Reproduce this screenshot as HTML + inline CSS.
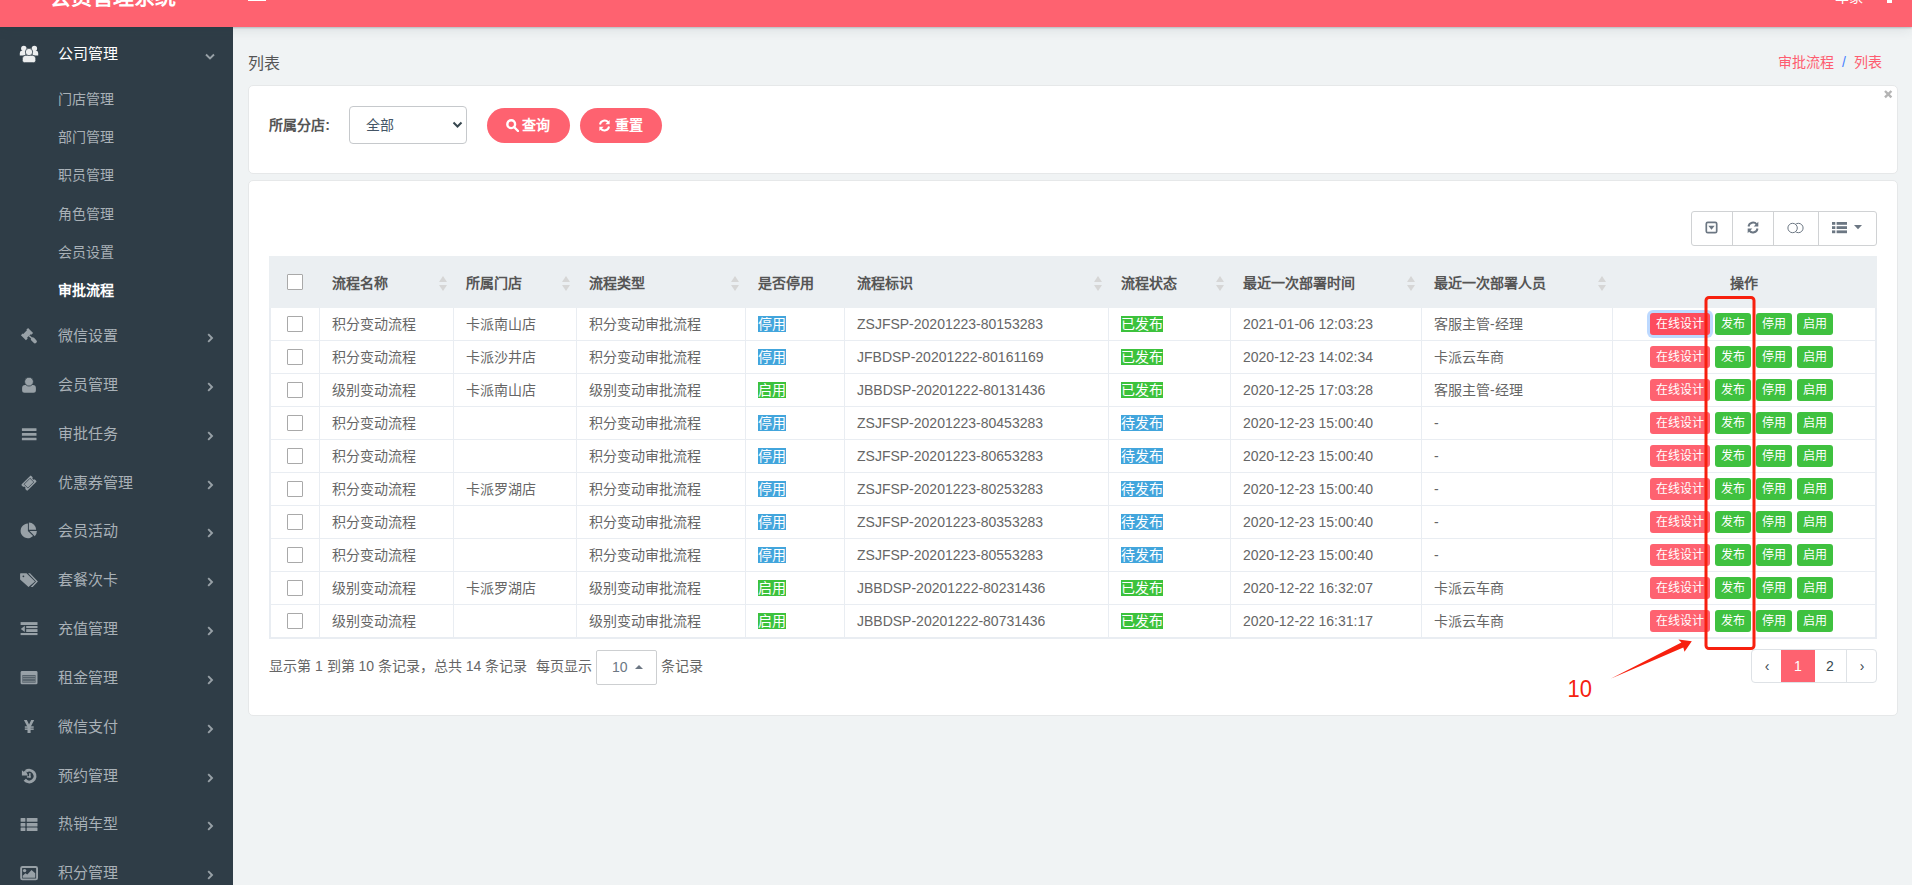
<!DOCTYPE html>
<html lang="zh-CN">
<head>
<meta charset="utf-8">
<title>会员管理系统</title>
<style>
*{box-sizing:border-box;margin:0;padding:0}
html,body{width:1912px;height:885px;overflow:hidden}
body{font-family:"Liberation Sans",sans-serif;font-size:14px;color:#666;background:#f0f3f4;position:relative}
.j{display:inline-block;white-space:nowrap;text-align:justify;text-align-last:justify;vertical-align:top}
/* header */
#hdr{position:absolute;left:0;top:0;width:1912px;height:27px;background:#fe6270;z-index:5;box-shadow:0 1px 2px rgba(40,60,70,.26),0 3px 12px rgba(40,60,70,.10);overflow:hidden}
#hdr .logo{width:126px;text-align:justify;text-align-last:justify;position:absolute;left:50px;top:-14px;font-size:21px;font-weight:bold;color:#fff;line-height:22px;white-space:nowrap}
#hdr .tog{position:absolute;left:248px;top:-2px;width:18px;height:3px;background:#fff}
#hdr .usr{width:28px;text-align:justify;text-align-last:justify;position:absolute;left:1835px;top:-11px;font-size:14px;color:#fff;line-height:16px;white-space:nowrap}
#hdr .usr2{position:absolute;left:1887px;top:-2px;width:5px;height:5px;background:#fff}
/* sidebar */
#side{position:absolute;left:0;top:27px;width:233px;height:858px;background:#2f3d47;z-index:2;overflow:hidden}
#side .mi{position:absolute;left:0;width:233px;height:30px;line-height:30px;color:#a9b1b7;font-size:15px;white-space:nowrap}
#side .mi .tx{position:absolute;left:58px;top:0;text-align:justify;text-align-last:justify}
#side .mi svg.ic{position:absolute;left:19px;top:6px;width:20px;height:18px;fill:#98a1a7}
#side .mi svg.ar{position:absolute;fill:none;stroke:#98a1a7;stroke-width:1.9}
#side .mi.on{color:#fff}
#side .mi.on svg.ic{fill:#eceeef}
#side .si{text-align:justify;text-align-last:justify;position:absolute;left:58px;height:20px;line-height:20px;color:#a9b1b7;font-size:14px;white-space:nowrap}
#side .si.on{color:#fff;font-weight:bold}
/* main */
#ttl{width:32px;white-space:nowrap;text-align:justify;text-align-last:justify;position:absolute;left:248px;top:53px;font-size:16px;line-height:22px;color:#555}
#bc{position:absolute;right:30px;top:52px;font-size:14px;line-height:20px;color:#fe5d70;white-space:nowrap}
#bc i{font-style:normal;color:#4680ff;margin:0 8px;vertical-align:top}
.card{position:absolute;background:#fff;border:1px solid #e6e8e9;border-radius:5px}
#c1{left:248px;top:85px;width:1650px;height:89px}
#c2{left:248px;top:180px;width:1650px;height:536px}
#cls{position:absolute;left:1883px;top:89px;width:10px;height:10px}
#lbl{width:61px;text-align:justify;text-align-last:justify;position:absolute;left:269px;top:116px;font-size:14px;font-weight:bold;color:#555;line-height:18px;white-space:nowrap}
#sel{position:absolute;left:349px;top:106px;width:118px;height:38px;border:1px solid #c6c9cc;border-radius:4px;background:#fff;color:#445566;font-size:14px;line-height:36px;padding-left:16px}
#sel svg{position:absolute;left:102px;top:13px;width:11px;height:9px;fill:none;stroke:#37474f;stroke-width:2}
.pb{position:absolute;top:108px;height:35px;border-radius:18px;background:#fe6270;color:#fff;font-size:14px;font-weight:bold;line-height:35px;white-space:nowrap}
.pb svg{position:absolute;top:11px;width:13px;height:13px}
.pb span{position:absolute;top:0;width:28px;text-align:justify;text-align-last:justify}
/* toolbar */
#tool{position:absolute;left:1691px;top:211px;width:186px;height:35px;border:1px solid #d0d2d4;border-radius:3px;background:#fff}
#tool div{position:absolute;top:0;height:33px;border-left:1px solid #d0d2d4}
#tool svg{position:absolute}
/* table */
#tb{position:absolute;left:269px;top:256px;width:1608px;border-collapse:separate;border-spacing:0;table-layout:fixed;font-size:14px;color:#666}
#tb th{height:52px;background:#ebeff2;font-weight:bold;color:#555;text-align:left;padding:0 0 0 12px;position:relative;white-space:nowrap;vertical-align:middle}
#tb td{height:33px;border-right:1px solid #e9edf2;border-bottom:1px solid #e9edf2;padding:0 0 0 12px;white-space:nowrap;vertical-align:middle;background:#fff;line-height:16px}
#tb td.la{padding-left:12px}
#tb tbody tr td:first-child{border-left:2px solid #e9edf2}
#tb tbody tr td:last-child{border-right:2px solid #e9edf2}
#tb tbody tr:last-child td{border-bottom:2px solid #e9edf2;height:34px}
#tb .ck{padding:0;text-align:left}
#tb .cb{display:block;width:16px;height:16px;border:1px solid #a9a9a9;background:#fff;margin-left:18px;border-radius:1px}
#tb td.ck .cb{margin-left:16px}
#tb th.op{text-align:center;padding:0 2px 0 0}
#tb td.op{padding:0 0 0 37px;font-size:0}
#tb .so{position:absolute;right:7px;top:20px;width:8px;height:15px}
#tb .so:before,#tb .so:after{content:"";position:absolute;left:0;border-left:4px solid transparent;border-right:4px solid transparent}
#tb .so:before{top:0;border-bottom:6px solid #d6d6d6}
#tb .so:after{top:9px;border-top:6px solid #d6d6d6}
.lb{text-align:justify;text-align-last:justify;display:inline-block;width:28px;overflow:hidden;white-space:nowrap;height:16px;line-height:16px;color:#fff;font-size:14px;vertical-align:middle;position:relative;top:-1px}
.lb.w3{width:42px}
.lb.bl{background:#42a5dc}
.lb.gr{background:#3cc23c}
.ab{display:inline-block;width:36px;height:22px;line-height:22px;font-size:12px;color:#fff;border-radius:3px;padding:0 6px;text-align:justify;text-align-last:justify;overflow:hidden;white-space:nowrap;margin-right:5px;vertical-align:middle}
.ab.rd{background:#fe6270;width:60px}
.ab.rd.fc{background:#fd4c5e;box-shadow:0 0 0 3px rgba(90,160,255,.4)}
.ab.gn{background:#3fc13f}
/* footer */
#ft{width:258px;text-align:justify;text-align-last:justify;position:absolute;left:269px;top:656px;font-size:14px;line-height:20px;color:#666;white-space:nowrap}
#ps{position:absolute;left:596px;top:650px;width:61px;height:35px;border:1px solid #cdcfd1;border-radius:2px;background:#fff;font-size:14px;line-height:33px;color:#6c7783;padding-left:15px}
#ps:after{content:"";position:absolute;left:38px;top:14px;border-left:4px solid transparent;border-right:4px solid transparent;border-bottom:4px solid #6c7783}
#ft1{width:56px;text-align:justify;text-align-last:justify;position:absolute;left:536px;top:656px;font-size:14px;line-height:20px;color:#666;white-space:nowrap}
#ft2{width:42px;text-align:justify;text-align-last:justify;position:absolute;left:661px;top:656px;font-size:14px;line-height:20px;color:#666;white-space:nowrap}
#pg{position:absolute;left:1751px;top:649px;width:126px;height:34px;border:1px solid #dee2e6;border-radius:4px;background:#fff;overflow:hidden}
#pg span{position:absolute;top:-1px;height:34px;line-height:34px;text-align:center;font-size:14px;color:#37474f;border-left:1px solid #dee2e6}
#pg span.on{background:#fe6270;color:#fff;border-left:none}
/* annotation */
#ann{position:absolute;left:0;top:0;width:1912px;height:885px;z-index:9;pointer-events:none}
#ten{position:absolute;left:1567.500px;top:676px;font-size:22px;line-height:24px;color:#f5220f;z-index:9;transform:scale(1,1.08);transform-origin:0 0}
</style>
</head>
<body>
<div id="hdr"><div class="logo">会员管理系统</div><div class="tog"></div><div class="usr">车家</div><div class="usr2"></div></div>
<div id="side">
<div class="mi on" style="top:12px"><svg class="ic" viewBox="0 0 20 18"><path d="M.8 10.600V8q0-2.200 2.200-2.200h2q1.500 0 1.500 1.500v3.300z"/><path d="M19.200 10.600V8q0-2.200-2.200-2.200h-2q-1.500 0-1.500 1.500v3.300z"/><circle cx="4.800" cy="3.500" r="2.700"/><circle cx="15.400" cy="3.500" r="2.700"/><path d="M3.300 15.500v-1.800q0-3.500 3.500-3.500h6.500q3.500 0 3.500 3.500v1.800q0 2.200-2.200 2.200H5.500q-2.200 0-2.200-2.200z" stroke="#2f3d47" stroke-width=".8"/><circle cx="10" cy="7" r="3.650" stroke="#2f3d47" stroke-width=".7"/></svg><span class="tx" style="width:4em">公司管理</span><svg class="ar" style="left:205px;top:12px;width:10px;height:10px" viewBox="0 0 10 10"><path d="M1 3.500l4 4 4-4"/></svg></div>
<div class="si" style="top:62px;width:4em">门店管理</div>
<div class="si" style="top:100px;width:4em">部门管理</div>
<div class="si" style="top:138px;width:4em">职员管理</div>
<div class="si" style="top:177px;width:4em">角色管理</div>
<div class="si" style="top:215px;width:4em">会员设置</div>
<div class="si on" style="top:253px;width:4em">审批流程</div>
<div class="mi" style="top:294px"><svg class="ic" viewBox="0 0 20 18"><g transform="translate(8 7.100) rotate(-45)"><path d="M-5.050-3.550h2.450v.85h5.200v-.85h2.450v7.100h-2.450v-.85h-5.200v.85h-2.450z"/><rect x="-.3" y="2.700" width="1.400" height="4"/><rect x="-1.500" y="5.800" width="3.800" height="6.900" rx="1.800"/></g></svg><span class="tx" style="width:4em">微信设置</span><svg class="ar" style="left:206px;top:12px;width:10px;height:10px" viewBox="0 0 10 10"><path d="M2.200 1.200l3.800 3.800-3.800 3.800"/></svg></div>
<div class="mi" style="top:343px"><svg class="ic" viewBox="0 0 20 18"><path d="M3.100 14.300v-2.400q0-3 3-3h7.800q3 0 3 3v2.400q0 2.500-2.500 2.500H5.600q-2.500 0-2.500-2.500z"/><circle cx="10" cy="5.650" r="4.400" stroke="#2f3d47" stroke-width=".8"/></svg><span class="tx" style="width:4em">会员管理</span><svg class="ar" style="left:206px;top:12px;width:10px;height:10px" viewBox="0 0 10 10"><path d="M2.200 1.200l3.800 3.800-3.800 3.800"/></svg></div>
<div class="mi" style="top:392px"><svg class="ic" viewBox="0 0 20 18"><rect x="2.900" y="3.200" width="14.600" height="2.700" rx=".3"/><rect x="2.900" y="8" width="14.600" height="2.700" rx=".3"/><rect x="2.900" y="12.700" width="14.600" height="2.500" rx=".3"/></svg><span class="tx" style="width:4em">审批任务</span><svg class="ar" style="left:206px;top:12px;width:10px;height:10px" viewBox="0 0 10 10"><path d="M2.200 1.200l3.800 3.800-3.800 3.800"/></svg></div>
<div class="mi" style="top:441px"><svg class="ic" viewBox="0 0 20 18"><g transform="translate(9.950 9.150) rotate(-45)"><rect x="-6.800" y="-4.300" width="13.600" height="8.600" rx=".9"/><circle cx="-6.900" cy="0" r="1.400" fill="#2f3d47"/><circle cx="6.900" cy="0" r="1.400" fill="#2f3d47"/><rect x="-4.200" y="-2.700" width="8.400" height="5.400" fill="none" stroke="#2f3d47" stroke-width=".7"/></g></svg><span class="tx" style="width:5em">优惠券管理</span><svg class="ar" style="left:206px;top:12px;width:10px;height:10px" viewBox="0 0 10 10"><path d="M2.200 1.200l3.800 3.800-3.800 3.800"/></svg></div>
<div class="mi" style="top:489px"><svg class="ic" viewBox="0 0 20 18"><path d="M8.900 8.900V1.600A7.300 7.300 0 1 0 14.060 14.060z"/><path d="M9.850 7.800V.5a7.300 7.300 0 0 1 7.300 7.300z"/><path d="M10.600 9.100h7.300a7.300 7.300 0 0 1-2.140 5.160z"/></svg><span class="tx" style="width:4em">会员活动</span><svg class="ar" style="left:206px;top:12px;width:10px;height:10px" viewBox="0 0 10 10"><path d="M2.200 1.200l3.800 3.800-3.800 3.800"/></svg></div>
<div class="mi" style="top:538px"><svg class="ic" viewBox="0 0 20 18"><path fill-rule="evenodd" d="M1.100 2.800q0-.6.600-.6h5.800l8.500 8.300-6.500 5.500-8.400-7.500zM4.400 4.400a.9.900 0 1 0 0 1.800.9.900 0 0 0 0-1.800z"/><path d="M9.100 2.200H11l7.900 8.300-5.200 5.500h-2.100l5.400-5.500z"/></svg><span class="tx" style="width:4em">套餐次卡</span><svg class="ar" style="left:206px;top:12px;width:10px;height:10px" viewBox="0 0 10 10"><path d="M2.200 1.200l3.800 3.800-3.800 3.800"/></svg></div>
<div class="mi" style="top:587px"><svg class="ic" viewBox="0 0 20 18"><rect x="1.600" y="2.100" width="16.900" height="2.900"/><rect x="7.200" y="6" width="11.300" height="2.100"/><rect x="7.200" y="9.100" width="11.300" height="2.900"/><rect x="1.600" y="13" width="16.900" height="2.100"/><path d="M5.800 5.800V12L1.800 9z"/></svg><span class="tx" style="width:4em">充值管理</span><svg class="ar" style="left:206px;top:12px;width:10px;height:10px" viewBox="0 0 10 10"><path d="M2.200 1.200l3.800 3.800-3.800 3.800"/></svg></div>
<div class="mi" style="top:636px"><svg class="ic" viewBox="0 0 20 18"><rect x="1.600" y="2.100" width="16.900" height="13.200" rx="1.400"/><rect x="3.300" y="6" width="13.300" height="7.700" fill="#56626b"/><rect x="3.800" y="7" width="12.300" height=".7" fill="#8b959b"/><rect x="3.800" y="9.400" width="12.300" height=".7" fill="#8b959b"/><rect x="3.800" y="11.900" width="12.300" height=".7" fill="#8b959b"/></svg><span class="tx" style="width:4em">租金管理</span><svg class="ar" style="left:206px;top:12px;width:10px;height:10px" viewBox="0 0 10 10"><path d="M2.200 1.200l3.800 3.800-3.800 3.800"/></svg></div>
<div class="mi" style="top:685px"><svg class="ic" viewBox="0 0 20 18"><path d="M4.900 2.100h3l2.150 4.500 2.150-4.500h3l-3.600 6.900v6.100H8.500V9z"/><rect x="5.800" y="8.300" width="8.900" height="1.500"/><rect x="5.800" y="10.400" width="8.900" height="1.500"/></svg><span class="tx" style="width:4em">微信支付</span><svg class="ar" style="left:206px;top:12px;width:10px;height:10px" viewBox="0 0 10 10"><path d="M2.200 1.200l3.800 3.800-3.800 3.800"/></svg></div>
<div class="mi" style="top:734px"><svg class="ic" viewBox="0 0 20 18"><path d="M6.870 4.350A5.800 5.800 0 1 1 5.760 12.830" fill="none" stroke="#98a1a7" stroke-width="3"/><path d="M2.900 3.200l1.800 1.600 1.600-1.500 2.800 5.200H2.900z"/><rect x="10.100" y="6.200" width="1.500" height="4.400"/><rect x="7.900" y="9.200" width="3.700" height="1.400"/></svg><span class="tx" style="width:4em">预约管理</span><svg class="ar" style="left:206px;top:12px;width:10px;height:10px" viewBox="0 0 10 10"><path d="M2.200 1.200l3.800 3.800-3.800 3.800"/></svg></div>
<div class="mi" style="top:782px"><svg class="ic" viewBox="0 0 20 18"><rect x="1.600" y="3.100" width="4.800" height="3.700" rx=".5"/><rect x="7.700" y="3.100" width="10.800" height="3.700" rx=".5"/><rect x="1.600" y="8" width="4.800" height="3.400" rx=".5"/><rect x="7.700" y="8" width="10.800" height="3.400" rx=".5"/><rect x="1.600" y="12.600" width="4.800" height="3.500" rx=".5"/><rect x="7.700" y="12.600" width="10.800" height="3.500" rx=".5"/></svg><span class="tx" style="width:4em">热销车型</span><svg class="ar" style="left:206px;top:12px;width:10px;height:10px" viewBox="0 0 10 10"><path d="M2.200 1.200l3.800 3.800-3.800 3.800"/></svg></div>
<div class="mi" style="top:831px"><svg class="ic" viewBox="0 0 20 18"><rect x="2.150" y="2.950" width="15.900" height="12.400" rx="1.300" fill="none" stroke="#98a1a7" stroke-width="1.900"/><circle cx="5.600" cy="6.600" r="1.700"/><path d="M3.700 13.700v-2l2.700-2.400 1.900 1.200 4.200-4.400 3.750 3.200v4.400z"/></svg><span class="tx" style="width:4em">积分管理</span><svg class="ar" style="left:206px;top:12px;width:10px;height:10px" viewBox="0 0 10 10"><path d="M2.200 1.200l3.800 3.800-3.800 3.800"/></svg></div>
</div>
<div id="ttl">列表</div>
<div id="bc"><span class="j" style="width:4em">审批流程</span><i>/</i><span class="j" style="width:2em">列表</span></div>
<div class="card" id="c1"></div>
<div class="card" id="c2"></div>
<svg id="cls" viewBox="0 0 10 10"><path d="M2 2l6.400 6.400M8.400 2L2 8.400" stroke="#b4b4b4" stroke-width="2.400" fill="none"/></svg>
<div id="lbl">所属分店:</div>
<div id="sel"><span class="j" style="width:2em">全部</span><svg viewBox="0 0 11 9"><path d="M1.500 2.500 L5.500 6.500 L9.500 2.500"/></svg></div>
<div class="pb" style="left:487px;width:83px"><svg style="left:19px" viewBox="0 0 13 13"><circle cx="5.200" cy="5.200" r="3.900" fill="none" stroke="#fff" stroke-width="2.400"/><path d="M8 8 L12 12" stroke="#fff" stroke-width="2.400" stroke-linecap="round"/></svg><span style="left:35px">查询</span></div>
<div class="pb" style="left:580px;width:82px"><svg style="left:18px" viewBox="0 0 13 13"><path d="M2 5.500 A4.600 4.600 0 0 1 10.200 3.400" fill="none" stroke="#fff" stroke-width="2"/><path d="M11.600 1 V5.200 H7.400 Z" fill="#fff"/><path d="M11 7.500 A4.600 4.600 0 0 1 2.800 9.600" fill="none" stroke="#fff" stroke-width="2"/><path d="M1.400 12 V7.800 H5.600 Z" fill="#fff"/></svg><span style="left:35px">重置</span></div>
<div id="tool">
<svg style="left:13px;top:9px;width:13px;height:13px" viewBox="0 0 13 13"><rect x="1.300" y="1.300" width="10.400" height="10.400" rx="1.500" fill="none" stroke="#6c7783" stroke-width="1.700"/><path d="M3.300 4.700h6.400L6.500 8.700z" fill="#6c7783"/></svg>
<div style="left:40px;width:41px"><svg style="left:12.500px;top:9.400px;width:14px;height:13px" viewBox="0 0 13 13"><path d="M2 5.500 A4.600 4.600 0 0 1 10.200 3.400" fill="none" stroke="#6c7783" stroke-width="1.900"/><path d="M11.800 .8 V5.400 H7.200 Z" fill="#6c7783"/><path d="M11 7.500 A4.600 4.600 0 0 1 2.800 9.600" fill="none" stroke="#6c7783" stroke-width="1.900"/><path d="M1.200 12.200 V7.600 H5.800 Z" fill="#6c7783"/></svg></div>
<div style="left:81px;width:45px"><svg style="left:12px;top:10px;width:19px;height:12px" viewBox="0 0 19 12"><circle cx="12.400" cy="6" r="4.700" fill="none" stroke="#6c7783" stroke-width="1"/><circle cx="6.600" cy="6" r="4.700" fill="#fff" stroke="#6c7783" stroke-width="1"/></svg></div>
<div style="left:126px;width:59px"><svg style="left:13px;top:10px;width:16px;height:12px" viewBox="0 0 16 12"><rect x="0" y="0" width="3.300" height="2.800" fill="#6c7783"/><rect x="4.600" y="0" width="10.400" height="2.800" fill="#6c7783"/><rect x="0" y="4.200" width="3.300" height="2.800" fill="#6c7783"/><rect x="4.600" y="4.200" width="10.400" height="2.800" fill="#6c7783"/><rect x="0" y="8.400" width="3.300" height="2.800" fill="#6c7783"/><rect x="4.600" y="8.400" width="10.400" height="2.800" fill="#6c7783"/></svg><svg style="left:35px;top:13px;width:8px;height:5px" viewBox="0 0 8 5"><path d="M0 0h8L4 4.300z" fill="#6c7783"/></svg></div>
</div>
<table id="tb"><colgroup><col style="width:51px"><col style="width:134px"><col style="width:123px"><col style="width:169px"><col style="width:99px"><col style="width:264px"><col style="width:122px"><col style="width:191px"><col style="width:191px"><col style="width:264px"></colgroup>
<thead><tr>
<th class="ck"><span class="cb"></span></th>
<th><span class="j" style="width:4em">流程名称</span><b class="so"></b></th>
<th><span class="j" style="width:4em">所属门店</span><b class="so"></b></th>
<th><span class="j" style="width:4em">流程类型</span><b class="so"></b></th>
<th><span class="j" style="width:4em">是否停用</span></th>
<th><span class="j" style="width:4em">流程标识</span><b class="so"></b></th>
<th><span class="j" style="width:4em">流程状态</span><b class="so"></b></th>
<th><span class="j" style="width:8em">最近一次部署时间</span><b class="so"></b></th>
<th><span class="j" style="width:8em">最近一次部署人员</span><b class="so"></b></th>
<th class="op"><span class="j" style="width:2em">操作</span></th>
</tr></thead><tbody>
<tr>
<td class="ck"><span class="cb"></span></td>
<td><span class="j" style="width:6em">积分变动流程</span></td><td><span class="j" style="width:5em">卡派南山店</span></td><td><span class="j" style="width:8em">积分变动审批流程</span></td>
<td><span class="lb bl">停用</span></td>
<td class="la">ZSJFSP-20201223-80153283</td>
<td><span class="lb w3 gr">已发布</span></td>
<td class="la">2021-01-06 12:03:23</td><td><span class="j" style="width:6.333em">客服主管-经理</span></td>
<td class="op"><span class="ab rd fc">在线设计</span><span class="ab gn">发布</span><span class="ab gn">停用</span><span class="ab gn">启用</span></td>
</tr>
<tr>
<td class="ck"><span class="cb"></span></td>
<td><span class="j" style="width:6em">积分变动流程</span></td><td><span class="j" style="width:5em">卡派沙井店</span></td><td><span class="j" style="width:8em">积分变动审批流程</span></td>
<td><span class="lb bl">停用</span></td>
<td class="la">JFBDSP-20201222-80161169</td>
<td><span class="lb w3 gr">已发布</span></td>
<td class="la">2020-12-23 14:02:34</td><td><span class="j" style="width:5em">卡派云车商</span></td>
<td class="op"><span class="ab rd">在线设计</span><span class="ab gn">发布</span><span class="ab gn">停用</span><span class="ab gn">启用</span></td>
</tr>
<tr>
<td class="ck"><span class="cb"></span></td>
<td><span class="j" style="width:6em">级别变动流程</span></td><td><span class="j" style="width:5em">卡派南山店</span></td><td><span class="j" style="width:8em">级别变动审批流程</span></td>
<td><span class="lb gr">启用</span></td>
<td class="la">JBBDSP-20201222-80131436</td>
<td><span class="lb w3 gr">已发布</span></td>
<td class="la">2020-12-25 17:03:28</td><td><span class="j" style="width:6.333em">客服主管-经理</span></td>
<td class="op"><span class="ab rd">在线设计</span><span class="ab gn">发布</span><span class="ab gn">停用</span><span class="ab gn">启用</span></td>
</tr>
<tr>
<td class="ck"><span class="cb"></span></td>
<td><span class="j" style="width:6em">积分变动流程</span></td><td></td><td><span class="j" style="width:8em">积分变动审批流程</span></td>
<td><span class="lb bl">停用</span></td>
<td class="la">ZSJFSP-20201223-80453283</td>
<td><span class="lb w3 bl">待发布</span></td>
<td class="la">2020-12-23 15:00:40</td><td class="la">-</td>
<td class="op"><span class="ab rd">在线设计</span><span class="ab gn">发布</span><span class="ab gn">停用</span><span class="ab gn">启用</span></td>
</tr>
<tr>
<td class="ck"><span class="cb"></span></td>
<td><span class="j" style="width:6em">积分变动流程</span></td><td></td><td><span class="j" style="width:8em">积分变动审批流程</span></td>
<td><span class="lb bl">停用</span></td>
<td class="la">ZSJFSP-20201223-80653283</td>
<td><span class="lb w3 bl">待发布</span></td>
<td class="la">2020-12-23 15:00:40</td><td class="la">-</td>
<td class="op"><span class="ab rd">在线设计</span><span class="ab gn">发布</span><span class="ab gn">停用</span><span class="ab gn">启用</span></td>
</tr>
<tr>
<td class="ck"><span class="cb"></span></td>
<td><span class="j" style="width:6em">积分变动流程</span></td><td><span class="j" style="width:5em">卡派罗湖店</span></td><td><span class="j" style="width:8em">积分变动审批流程</span></td>
<td><span class="lb bl">停用</span></td>
<td class="la">ZSJFSP-20201223-80253283</td>
<td><span class="lb w3 bl">待发布</span></td>
<td class="la">2020-12-23 15:00:40</td><td class="la">-</td>
<td class="op"><span class="ab rd">在线设计</span><span class="ab gn">发布</span><span class="ab gn">停用</span><span class="ab gn">启用</span></td>
</tr>
<tr>
<td class="ck"><span class="cb"></span></td>
<td><span class="j" style="width:6em">积分变动流程</span></td><td></td><td><span class="j" style="width:8em">积分变动审批流程</span></td>
<td><span class="lb bl">停用</span></td>
<td class="la">ZSJFSP-20201223-80353283</td>
<td><span class="lb w3 bl">待发布</span></td>
<td class="la">2020-12-23 15:00:40</td><td class="la">-</td>
<td class="op"><span class="ab rd">在线设计</span><span class="ab gn">发布</span><span class="ab gn">停用</span><span class="ab gn">启用</span></td>
</tr>
<tr>
<td class="ck"><span class="cb"></span></td>
<td><span class="j" style="width:6em">积分变动流程</span></td><td></td><td><span class="j" style="width:8em">积分变动审批流程</span></td>
<td><span class="lb bl">停用</span></td>
<td class="la">ZSJFSP-20201223-80553283</td>
<td><span class="lb w3 bl">待发布</span></td>
<td class="la">2020-12-23 15:00:40</td><td class="la">-</td>
<td class="op"><span class="ab rd">在线设计</span><span class="ab gn">发布</span><span class="ab gn">停用</span><span class="ab gn">启用</span></td>
</tr>
<tr>
<td class="ck"><span class="cb"></span></td>
<td><span class="j" style="width:6em">级别变动流程</span></td><td><span class="j" style="width:5em">卡派罗湖店</span></td><td><span class="j" style="width:8em">级别变动审批流程</span></td>
<td><span class="lb gr">启用</span></td>
<td class="la">JBBDSP-20201222-80231436</td>
<td><span class="lb w3 gr">已发布</span></td>
<td class="la">2020-12-22 16:32:07</td><td><span class="j" style="width:5em">卡派云车商</span></td>
<td class="op"><span class="ab rd">在线设计</span><span class="ab gn">发布</span><span class="ab gn">停用</span><span class="ab gn">启用</span></td>
</tr>
<tr>
<td class="ck"><span class="cb"></span></td>
<td><span class="j" style="width:6em">级别变动流程</span></td><td></td><td><span class="j" style="width:8em">级别变动审批流程</span></td>
<td><span class="lb gr">启用</span></td>
<td class="la">JBBDSP-20201222-80731436</td>
<td><span class="lb w3 gr">已发布</span></td>
<td class="la">2020-12-22 16:31:17</td><td><span class="j" style="width:5em">卡派云车商</span></td>
<td class="op"><span class="ab rd">在线设计</span><span class="ab gn">发布</span><span class="ab gn">停用</span><span class="ab gn">启用</span></td>
</tr>
</tbody></table>
<div id="ft">显示第 1 到第 10 条记录，总共 14 条记录</div>
<div id="ft1">每页显示</div>
<div id="ps">10</div>
<div id="ft2">条记录</div>
<div id="pg"><span style="left:0;width:30px;border-left:none">‹</span><span class="on" style="left:29px;width:34px">1</span><span style="left:62px;width:32px;border-left:none">2</span><span style="left:94px;width:31px">›</span></div>
<svg id="ann" viewBox="0 0 1912 885"><rect x="1706" y="297.500" width="48" height="351" rx="3" fill="none" stroke="#f7200e" stroke-width="3"/><path d="M1610.600 678.800 L1681.400 642.600 L1678.400 639.400 L1691.800 641.300 L1684.500 651.700 L1683.300 647.600 Z" fill="#f7200e"/></svg>
<div id="ten">10</div>
</body>
</html>
